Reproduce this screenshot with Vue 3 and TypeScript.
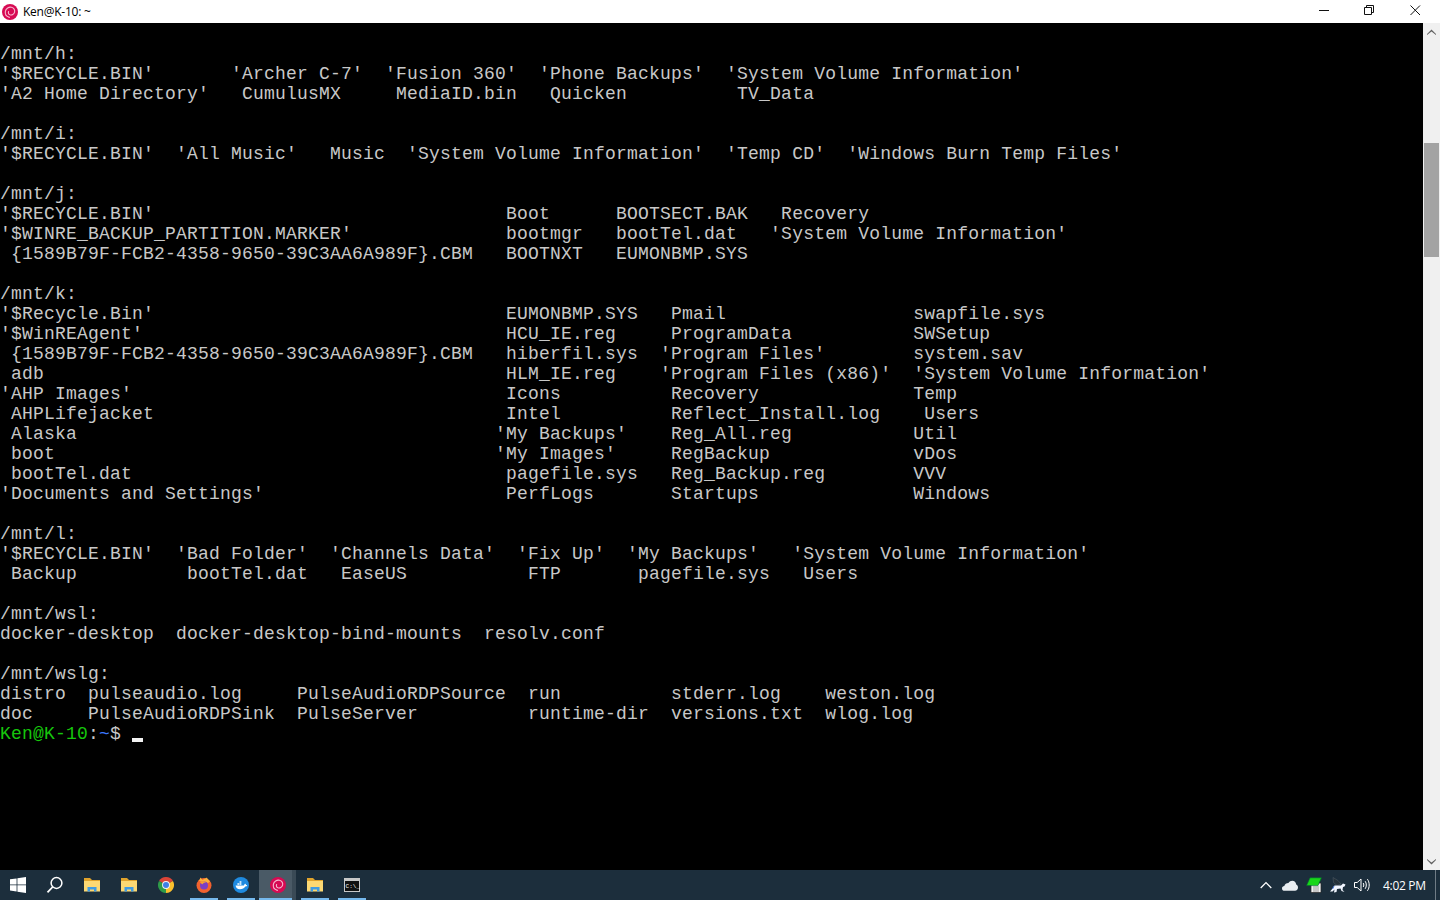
<script setup lang="ts">
const lines: string[] = [
  "",
  "/mnt/h:",
  "'$RECYCLE.BIN'       'Archer C-7'  'Fusion 360'  'Phone Backups'  'System Volume Information'",
  "'A2 Home Directory'   CumulusMX     MediaID.bin   Quicken          TV_Data",
  "",
  "/mnt/i:",
  "'$RECYCLE.BIN'  'All Music'   Music  'System Volume Information'  'Temp CD'  'Windows Burn Temp Files'",
  "",
  "/mnt/j:",
  "'$RECYCLE.BIN'                                Boot      BOOTSECT.BAK   Recovery",
  "'$WINRE_BACKUP_PARTITION.MARKER'              bootmgr   bootTel.dat   'System Volume Information'",
  " {1589B79F-FCB2-4358-9650-39C3AA6A989F}.CBM   BOOTNXT   EUMONBMP.SYS",
  "",
  "/mnt/k:",
  "'$Recycle.Bin'                                EUMONBMP.SYS   Pmail                 swapfile.sys",
  "'$WinREAgent'                                 HCU_IE.reg     ProgramData           SWSetup",
  " {1589B79F-FCB2-4358-9650-39C3AA6A989F}.CBM   hiberfil.sys  'Program Files'        system.sav",
  " adb                                          HLM_IE.reg    'Program Files (x86)'  'System Volume Information'",
  "'AHP Images'                                  Icons          Recovery              Temp",
  " AHPLifejacket                                Intel          Reflect_Install.log    Users",
  " Alaska                                      'My Backups'    Reg_All.reg           Util",
  " boot                                        'My Images'     RegBackup             vDos",
  " bootTel.dat                                  pagefile.sys   Reg_Backup.reg        VVV",
  "'Documents and Settings'                      PerfLogs       Startups              Windows",
  "",
  "/mnt/l:",
  "'$RECYCLE.BIN'  'Bad Folder'  'Channels Data'  'Fix Up'  'My Backups'   'System Volume Information'",
  " Backup          bootTel.dat   EaseUS           FTP       pagefile.sys   Users",
  "",
  "/mnt/wsl:",
  "docker-desktop  docker-desktop-bind-mounts  resolv.conf",
  "",
  "/mnt/wslg:",
  "distro  pulseaudio.log     PulseAudioRDPSource  run          stderr.log    weston.log",
  "doc     PulseAudioRDPSink  PulseServer          runtime-dir  versions.txt  wlog.log",
];
const apps = ["search", "folder", "folder", "chrome", "firefox", "whale", "debian", "folder", "cmd"];
const running = [false, false, false, false, true, true, true, true, true];
</script>

<template>
  <div class="screen">
    <header class="titlebar">
      <svg class="title-icon" width="16" height="16" viewBox="0 0 16 16">
        <circle cx="8" cy="8" r="8" fill="#d70a53" />
        <path d="M7.4 13.4C4.4 12.6 2.8 10 3.4 7.2 4 4.4 6.8 2.6 9.4 3.2 11.8 3.8 13.2 6 12.6 8.2 12 10.4 9.8 11.4 8 10.8 6.6 10.2 6 8.8 6.6 7.6" fill="none" stroke="#f6b8cf" stroke-width="1.1" stroke-linecap="round" />
      </svg>
      <span class="title-text">Ken@K-10: ~</span>
      <div class="winbtns">
        <div class="winbtn">
          <svg width="11" height="11" viewBox="0 0 11 11"><path d="M0 5.5H10" stroke="#111" fill="none" /></svg>
        </div>
        <div class="winbtn">
          <svg width="11" height="11" viewBox="0 0 11 11"><path d="M.5 2.5H7.5V9.5H.5ZM2.5 2.5V.5H9.5V7.5H7.5" stroke="#111" fill="none" /></svg>
        </div>
        <div class="winbtn">
          <svg width="11" height="11" viewBox="0 0 11 11"><path d="M.5.5 10 10M10 .5.5 10" stroke="#111" fill="none" /></svg>
        </div>
      </div>
    </header>

    <main class="console">
      <div class="output">
        <div v-for="(line, i) in lines" :key="i" class="row">{{ line }}</div>
        <div class="row"><span class="green">Ken@K-10</span><span class="plain">:</span><span class="blue">~</span>$ <span class="cursor"></span></div>
      </div>
      <aside class="scrollbar">
        <div class="arrow">
          <svg width="9" height="6" viewBox="0 0 9 6"><path d="M0 5 4.5 .5 9 5V6L4.5 2.5 0 6Z" fill="#606060" /></svg>
        </div>
        <div class="track">
          <div class="thumb"></div>
        </div>
        <div class="arrow">
          <svg width="9" height="6" viewBox="0 0 9 6"><path d="M0 1 4.5 5.5 9 1V0L4.5 3.5 0 0Z" fill="#606060" /></svg>
        </div>
      </aside>
    </main>

    <footer class="taskbar">
      <div class="start">
        <svg width="16" height="16" viewBox="0 0 16 16"><path d="M0 2.3 6.6 1.4V7.5H0ZM7.4 1.3 16 0V7.5H7.4ZM0 8.3H6.6V14.5L0 13.6ZM7.4 8.3H16V16L7.4 14.7Z" fill="#fff" /></svg>
      </div>
      <div v-for="(app, i) in apps" :key="i" class="cell" :class="{ active: app === 'debian', running: running[i] }">
        <svg v-if="app === 'search'" width="18" height="18" viewBox="0 0 18 18">
          <circle cx="10.5" cy="7" r="5.4" fill="none" stroke="#fff" stroke-width="1.5" />
          <path d="M6.6 11 1.5 16.4" stroke="#fff" stroke-width="1.8" fill="none" />
        </svg>
        <svg v-else-if="app === 'folder'" width="16" height="16" viewBox="0 0 16 16">
          <path d="M0 1H6L8 3H16V6H0Z" fill="#e0a32c" />
          <path d="M0 4H16V14.5H0Z" fill="#fcd873" />
          <path d="M3.5 14.5V10H12.5V14.5H10V12.5H6V14.5Z" fill="#3f9be3" />
        </svg>
        <svg v-else-if="app === 'chrome'" width="16" height="16" viewBox="0 0 16 16">
          <path d="M8 8 1.07 4A8 8 0 0 1 14.93 4Z" fill="#db4437" />
          <path d="M8 8 14.93 4A8 8 0 0 1 8 16Z" fill="#fbc02d" />
          <path d="M8 8 8 16A8 8 0 0 1 1.07 4Z" fill="#2e9b48" />
          <circle cx="8" cy="8" r="3.9" fill="#f4f4f4" />
          <circle cx="8" cy="8" r="3" fill="#3f7fe8" />
        </svg>
        <svg v-else-if="app === 'firefox'" width="16" height="16" viewBox="0 0 16 16">
          <circle cx="8" cy="8.5" r="7.5" fill="#f2622e" />
          <path d="M3 4 4.5 .6 6.5 3C8.5 1.6 11 .5 11 .5 10.8 1.6 12.6 2.4 14 4.5L12 6Z" fill="#fbb03b" />
          <circle cx="8" cy="8.5" r="4" fill="#7b3fc4" />
          <path d="M4 5C6 3.6 9 4 10 6 8.6 5.4 7 6 6.8 7.2 5.6 7 4.6 6.2 4 5Z" fill="#f6a02f" />
        </svg>
        <svg v-else-if="app === 'whale'" width="16" height="16" viewBox="0 0 16 16">
          <circle cx="8" cy="8" r="8" fill="#1f8ae0" />
          <path d="M2.6 8.4H11C11.2 7.4 11.8 6.8 12.4 6.8 12.8 7.2 13 7.6 13 8 13.6 8 14 8.2 14.2 8.4 13.6 9.4 12.8 9.6 12.2 9.6 11.2 11.4 9.4 12.2 7 12.2 4.4 12.2 2.8 10.8 2.6 8.4Z" fill="#fff" />
          <path d="M4.4 6.2H6.2V7.8H4.4ZM6.6 6.2H8.4V7.8H6.6ZM6.6 4.2H8.4V5.8H6.6Z" fill="#fff" />
        </svg>
        <svg v-else-if="app === 'debian'" width="16" height="16" viewBox="0 0 16 16">
          <circle cx="8" cy="8" r="8" fill="#d70a53" />
          <path d="M7.4 13.4C4.4 12.6 2.8 10 3.4 7.2 4 4.4 6.8 2.6 9.4 3.2 11.8 3.8 13.2 6 12.6 8.2 12 10.4 9.8 11.4 8 10.8 6.6 10.2 6 8.8 6.6 7.6" fill="none" stroke="#f6b8cf" stroke-width="1.1" stroke-linecap="round" />
        </svg>
        <svg v-else-if="app === 'cmd'" width="16" height="16" viewBox="0 0 16 16">
          <rect x=".5" y="1.5" width="15" height="13" fill="#111" stroke="#c8c8c8" />
          <rect x="1" y="2" width="14" height="2" fill="#c8c8c8" />
          <text x="1.6" y="11.4" class="cmd-text">C:\_</text>
        </svg>
      </div>

      <div class="spacer"></div>

      <div class="tray">
        <svg class="tray-item chevron" width="12" height="8" viewBox="0 0 12 8"><path d="M.7 7 6 1.6 11.3 7" fill="none" stroke="#fff" stroke-width="1.3" /></svg>
        <svg class="tray-item" width="16" height="11" viewBox="0 0 16 11"><path d="M2.6 10.8C1 10.8 0 9.8 0 8.4 0 7 1 6.2 2.3 6.1 2.8 4.3 4.4 3 6.4 3 7.4 1.6 8.8.8 10.2.8 12.4.8 14 2.4 14.2 4.6 15.4 5.2 16 6.4 16 7.6 16 9.4 14.8 10.8 13 10.8Z" fill="#e9eef1" /></svg>
        <svg class="tray-item" width="16" height="16" viewBox="0 0 16 16">
          <path d="M5 6H15V15.5H5Z" fill="#f2f2f2" stroke="#222" stroke-width=".7" />
          <path d="M7 10H13M7 12H13M7 14H13" stroke="#777" stroke-width=".7" />
          <path d="M4 .8H15.5L12 8.6H.5Z" fill="#19d619" stroke="#063" stroke-width=".6" />
        </svg>
        <svg class="tray-item" width="16" height="16" viewBox="0 0 16 16">
          <path d="M3 .5 8 3.5 11 7 7 8.5 3.5 5.5Z" fill="#25313a" stroke="#55606a" stroke-width=".5" />
          <path d="M0 14.5 3 11 4.5 8.5 7.5 8.5 11 8.5 13 6.5 15.5 7.5 14.5 9.5 13 10 12.5 13 14.5 15 11.5 14 10.5 11.5 7 12 6.5 15 4 15.5 4.5 12.5 2.5 14.5Z" fill="#f2f6ff" />
          <path d="M4 9 2.6 12" stroke="#4a78d8" stroke-width="1" />
        </svg>
        <svg class="tray-item" width="17" height="14" viewBox="0 0 17 14">
          <path d="M.5 4.5H3.2L7 1V13L3.2 9.5H.5Z" fill="none" stroke="#fff" />
          <path d="M9.2 5C10 6.2 10 7.8 9.2 9M11.2 3.2C12.7 5.4 12.7 8.6 11.2 10.8M13.4 1.2C15.8 4.4 15.8 9.6 13.4 12.8" fill="none" stroke="#fff" />
        </svg>
      </div>
      <div class="clock">4:02 PM</div>
      <div class="show-desktop"></div>
    </footer>
  </div>
</template>

<style scoped>
.screen {
  width: 1440px;
  height: 900px;
  display: flex;
  flex-direction: column;
  overflow: hidden;
  background: #000;
}
.titlebar {
  height: 23px;
  flex: none;
  display: flex;
  align-items: center;
  background: #fff;
  padding-left: 2px;
}
.title-icon {
  flex: none;
}
.title-text {
  margin-left: 5px;
  font: 12px "Open Sans", "Noto Sans", sans-serif;
  color: #000;
  letter-spacing: -0.25px;
}
.winbtns {
  margin-left: auto;
  margin-right: 2px;
  display: flex;
  height: 100%;
}
.winbtn {
  width: 45.5px;
  height: 100%;
  display: flex;
  align-items: flex-start;
  justify-content: center;
  padding-top: 5px;
  box-sizing: border-box;
}
.console {
  flex: 1;
  min-height: 0;
  display: flex;
}
.output {
  flex: 1;
  min-width: 0;
  padding-top: 1px;
  font-family: "Liberation Mono", monospace;
  font-size: 18px;
  letter-spacing: 0.2px;
  line-height: 20px;
  color: #c8c8c8;
  overflow: hidden;
}
.row {
  height: 20px;
  white-space: pre;
}
.green {
  color: #16c60c;
}
.blue {
  color: #3b78ff;
}
.plain {
  color: #c8c8c8;
}
.cursor {
  display: inline-block;
  width: 11px;
  height: 4px;
  background: #f2f2f2;
  vertical-align: -3px;
}
.scrollbar {
  width: 17px;
  flex: none;
  background: #f0f0f0;
  display: flex;
  flex-direction: column;
}
.arrow {
  height: 17px;
  flex: none;
  display: flex;
  align-items: center;
  justify-content: center;
}
.track {
  flex: 1;
  padding: 103px 1px 0 1px;
}
.thumb {
  height: 114px;
  background: #a3a3a3;
}
.taskbar {
  height: 30px;
  flex: none;
  display: flex;
  align-items: center;
  background: #1c2e3c;
}
.start {
  width: 36.5px;
  height: 100%;
  flex: none;
  display: flex;
  align-items: center;
  justify-content: center;
}
.cell {
  width: 37.15px;
  height: 100%;
  flex: none;
  display: flex;
  align-items: center;
  justify-content: center;
  position: relative;
}
.cell.running::after {
  content: "";
  position: absolute;
  left: 4.5px;
  right: 4.5px;
  bottom: 0;
  height: 2px;
  background: #76b9ed;
}
.cell.active {
  background: #4a5a66;
  box-shadow: inset -4px 0 0 #3a4a56;
}
.cell.active::after {
  left: 0;
  right: 4px;
}
.cmd-text {
  font: 6px "Liberation Mono", monospace;
  fill: #fff;
}
.spacer {
  flex: 1;
}
.tray {
  display: flex;
  align-items: center;
  gap: 8px;
}
.tray-item {
  flex: none;
}
.chevron {
  margin-right: 2px;
}
.clock {
  margin-left: 12px;
  width: 52px;
  font: 12px "Open Sans", "Noto Sans", sans-serif;
  letter-spacing: -0.3px;
  color: #fff;
}
.show-desktop {
  width: 1px;
  height: 100%;
  background: #6f7b85;
  margin-right: 4px;
}
</style>

<style>
html, body {
  margin: 0;
  background: #000;
}
</style>
